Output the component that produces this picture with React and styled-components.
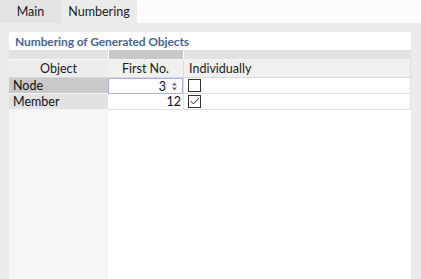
import React from 'react';
import styled, { createGlobalStyle } from 'styled-components';

const GlobalStyle = createGlobalStyle`
  html, body {
    margin: 0;
    padding: 0;
    background: #ebebeb;
  }
  body {
    font-family: Lato, 'Noto Sans', sans-serif;
    font-size: 12px;
    color: #000;
  }
`;

const Root = styled.div`
  width: 421px;
  height: 279px;
  display: flex;
  flex-direction: column;
  overflow: hidden;
`;

const TabBar = styled.div`
  height: 23px;
  display: flex;
  background: #fcfcfc;
`;

const Tab = styled.div`
  width: ${(p) => p.width}px;
  display: flex;
  align-items: center;
  justify-content: center;
  background: ${(p) => (p.active ? '#ebebeb' : '#e3e3e3')};
  color: #1a1a1a;
  font-size: 12.5px;
`;

const Panel = styled.div`
  flex: 1;
  background: #ebebeb;
  padding: 9px 10px 0 9px;
  display: flex;
`;

const Box = styled.div`
  flex: 1;
  background: #fff;
  display: flex;
  flex-direction: column;
`;

const Title = styled.div`
  height: 18px;
  display: flex;
  align-items: center;
  padding-left: 6px;
  color: #4b6694;
  font-weight: 700;
  font-size: 12px;
  letter-spacing: -0.1px;
`;

const Grid = styled.div`
  flex: 1;
  display: grid;
  grid-template-columns: 99px 75px 1fr;
  grid-template-rows: 9px 19px 16px 16px 1fr;
`;

const Band = styled.div`
  background: ${(p) => (p.dark ? '#c8c8c8' : '#e2e2e2')};
  border-left: ${(p) => (p.sep ? '1px solid #fff' : 'none')};
`;

const HeadCell = styled.div`
  display: flex;
  align-items: center;
  justify-content: ${(p) => (p.left ? 'flex-start' : 'center')};
  padding-left: ${(p) => (p.left ? '5px' : '0')};
  padding-right: ${(p) => (p.shift ? '0' : '0')};
  background: ${(p) => (p.obj ? '#ececec' : '#f0f0f0')};
  border-top: 1px solid #f6f6f6;
  border-bottom: 1px solid #d9d9d9;
  border-left: ${(p) => (p.sep ? '1px solid #dcdcdc' : 'none')};
  border-right: ${(p) => (p.last ? '1px solid #dcdcdc' : 'none')};
  color: #1a1a1a;
  font-size: 12.5px;
`;

const ObjCell = styled.div`
  display: flex;
  align-items: center;
  padding-left: 4px;
  background: ${(p) => (p.selected ? '#c9c9c9' : '#e2e2e2')};
  border-bottom: 1px solid #f4f4f4;
  font-size: 12.5px;
  color: #111;
`;

const NumCell = styled.div`
  display: flex;
  align-items: center;
  justify-content: flex-end;
  gap: 5px;
  padding-right: ${(p) => (p.editing ? '4px' : '2px')};
  border: ${(p) => (p.editing ? '1px solid #a9b0ea' : 'none')};
  border-bottom: 1px solid ${(p) => (p.editing ? '#a9b0ea' : '#e0e0e0')};
  font-size: 12.5px;
  color: #0c0c2c;
`;

const CheckCell = styled.div`
  display: flex;
  align-items: center;
  padding-left: 4px;
  border-left: 1px solid #e0e0e0;
  border-right: 1px solid #e0e0e0;
  border-bottom: 1px solid #e0e0e0;
`;

const CheckBox = styled.div`
  width: 11px;
  height: 11px;
  border: 1px solid #333;
  background: #fff;
  display: flex;
  align-items: center;
  justify-content: center;
`;

const Filler = styled.div`
  background: ${(p) => (p.side ? '#f6f6f6' : '#fff')};
`;

const Spinner = () => (
  <svg width="7" height="9" viewBox="0 0 7 9">
    <path d="M3.5 0.5 L6 3.5 L1 3.5 Z" fill="#6a6a6a" />
    <path d="M1 5.5 L6 5.5 L3.5 8.5 Z" fill="#6a6a6a" />
  </svg>
);

const Check = () => (
  <svg width="11" height="11" viewBox="0 0 11 11">
    <path d="M1.5 5 L4.5 8 L10 2" fill="none" stroke="#333" strokeWidth="1" />
  </svg>
);

const rows = [
  { name: 'Node', first: 3, individually: false, editing: true },
  { name: 'Member', first: 12, individually: true, editing: false },
];

const App = () => (
  <Root>
    <GlobalStyle />
    <TabBar>
      <Tab width={61}>Main</Tab>
      <Tab width={76} active>
        Numbering
      </Tab>
    </TabBar>
    <Panel>
      <Box>
        <Title>Numbering of Generated Objects</Title>
        <Grid>
          <Band />
          <Band dark sep />
          <Band sep />
          <HeadCell obj>Object</HeadCell>
          <HeadCell>First No.</HeadCell>
          <HeadCell left sep last>
            Individually
          </HeadCell>
          {rows.map((r) => (
            <React.Fragment key={r.name}>
              <ObjCell selected={r.editing}>{r.name}</ObjCell>
              <NumCell editing={r.editing}>
                {r.first}
                {r.editing && <Spinner />}
              </NumCell>
              <CheckCell>
                <CheckBox>{r.individually && <Check />}</CheckBox>
              </CheckCell>
            </React.Fragment>
          ))}
          <Filler side />
          <Filler />
          <Filler />
        </Grid>
      </Box>
    </Panel>
  </Root>
);

export default App;
